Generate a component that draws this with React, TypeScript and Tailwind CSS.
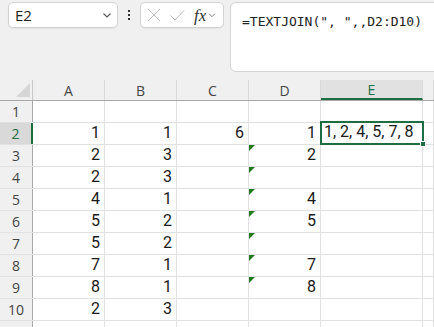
import React from 'react';

const cols = ['A', 'B', 'C', 'D', 'E', ''];
const colWidths = ['w-[72px]', 'w-[72px]', 'w-[72px]', 'w-[72px]', 'w-[102px]', 'flex-1'];

const a = ['', '1', '2', '2', '4', '5', '5', '7', '8', '2', ''];
const b = ['', '1', '3', '3', '1', '2', '2', '1', '1', '3', ''];
const c = ['', '6', '', '', '', '', '', '', '', '', ''];
const d = ['', '1', '2', '', '4', '5', '', '7', '8', '', ''];

const flagged = [3, 4, 5, 6, 7, 8, 9];

function Chevron({ className = '' }: { className?: string }) {
    return (
        <svg viewBox="0 0 12 12" className={className} fill="none" stroke="currentColor" strokeWidth="1.1">
            <path d="M2.5 4.5 L6 8 L9.5 4.5" />
        </svg>
    );
}

function Cell({ value, width, row, col }: { value: string; width: string; row: number; col: number }) {
    const isSel = row === 2 && col === 4;
    return (
        <div className={`relative h-full border-r border-[#e1e1e1] bg-white flex items-end justify-end pr-[4px] pb-[2px] ${width}`}>
            {col === 3 && flagged.includes(row) && (
                <div className="absolute left-0 top-0 w-0 h-0 border-t-[6px] border-r-[6px] border-t-[#1e7b1e] border-r-transparent" />
            )}
            {!isSel && <span className="leading-[18px]">{value}</span>}
            {isSel && (
                <div className="absolute -left-[1px] -top-[2px] w-[104px] h-[24px] border-2 border-[#1f6e43] flex items-end pl-[2px] pb-[2px] z-10">
                    <span className="leading-[18px]">1, 2, 4, 5, 7, 8</span>
                    <div className="absolute -right-[4px] -bottom-[4px] w-[6px] h-[6px] bg-[#1f6e43] border border-white" />
                </div>
            )}
        </div>
    );
}

export default function App() {
    const rows = Array.from({ length: 11 }, (_, i) => i + 1);
    return (
        <div className="w-[434px] h-[327px] overflow-hidden bg-[#f0f0f0] font-['Roboto',sans-serif] text-[#1a1a1a]">
            {/* formula bar area */}
            <div className="h-[80px] flex items-start pt-[2px] pl-[8px]">
                <div className="w-[110px] h-[26px] bg-white border border-[#d4d4d4] rounded-[5px] flex items-center pl-[6px] pr-[4px] shadow-[0_1px_1px_rgba(0,0,0,0.05)]">
                    <span className="flex-1 text-[15px] font-['Open_Sans',sans-serif] text-[#222]">E2</span>
                    <Chevron className="w-[12px] h-[12px] text-[#555]" />
                </div>
                <div className="w-[22px] h-[26px] flex flex-col items-center justify-center gap-[2px]">
                    <span className="w-[2px] h-[2px] bg-[#333]" />
                    <span className="w-[2px] h-[2px] bg-[#333]" />
                    <span className="w-[2px] h-[2px] bg-[#333]" />
                </div>
                <div className="w-[84px] h-[26px] bg-white border border-[#d4d4d4] rounded-[5px] flex items-center pl-[5px] shadow-[0_1px_1px_rgba(0,0,0,0.05)]">
                    <svg viewBox="0 0 16 16" className="w-[16px] h-[16px] text-[#bdbdbd]" fill="none" stroke="currentColor" strokeWidth="1">
                        <path d="M2 2 L14 14 M14 2 L2 14" />
                    </svg>
                    <svg viewBox="0 0 16 16" className="ml-[7px] w-[16px] h-[16px] text-[#bdbdbd]" fill="none" stroke="currentColor" strokeWidth="1">
                        <path d="M1.5 8.5 L6 13 L15 3.5" />
                    </svg>
                    <span className="ml-[9px] text-[17px] leading-none italic font-['Liberation_Serif',serif] text-[#333]">fx</span>
                    <Chevron className="ml-[1px] w-[10px] h-[10px] text-[#777]" />
                </div>
                <div className="ml-[6px] -mr-[10px] flex-1 h-[70px] bg-white border border-[#d4d4d4] rounded-[6px] pl-[11px] pt-[6px]">
                    <span className="text-[13px] font-['DejaVu_Sans_Mono',monospace] text-[#222]">=TEXTJOIN(", ",,D2:D10)</span>
                </div>
            </div>

            {/* column headers */}
            <div className="flex h-[21px] border-b border-[#a8a8a8]">
                <div className="relative w-[33px] border-r border-[#c8c8c8]">
                    <div className="absolute left-[16px] top-[3px] w-0 h-0 border-b-[14px] border-l-[14px] border-b-[#d6d6d6] border-l-transparent" />
                </div>
                {cols.map((col, i) => (
                    <div
                        key={i}
                        className={`${colWidths[i]} flex items-center justify-center text-[14px] font-['Open_Sans',sans-serif] border-r border-[#d9d9d9] ${col === 'E' ? 'bg-[#e1e1e1] text-[#1f6e43] border-b-2 border-b-[#1f6e43]' : 'text-[#444]'}`}
                    >
                        {col}
                    </div>
                ))}
            </div>

            {/* rows */}
            {rows.map((r) => (
                <div key={r} className="flex h-[22px] border-b border-[#e1e1e1] text-[16px]">
                    <div
                        className={`w-[33px] flex items-center justify-center text-[14px] font-['Open_Sans',sans-serif] ${r === 2 ? 'bg-[#d9d9d9] text-[#1f6e43] border-r-2 border-[#1f6e43]' : 'text-[#444] border-r border-[#a8a8a8]'}`}
                    >
                        {r <= 10 ? r : ''}
                    </div>
                    <Cell value={a[r - 1]} width={colWidths[0]} row={r} col={0} />
                    <Cell value={b[r - 1]} width={colWidths[1]} row={r} col={1} />
                    <Cell value={c[r - 1]} width={colWidths[2]} row={r} col={2} />
                    <Cell value={d[r - 1]} width={colWidths[3]} row={r} col={3} />
                    <Cell value="" width={colWidths[4]} row={r} col={4} />
                    <Cell value="" width={colWidths[5]} row={r} col={5} />
                </div>
            ))}
        </div>
    );
}
